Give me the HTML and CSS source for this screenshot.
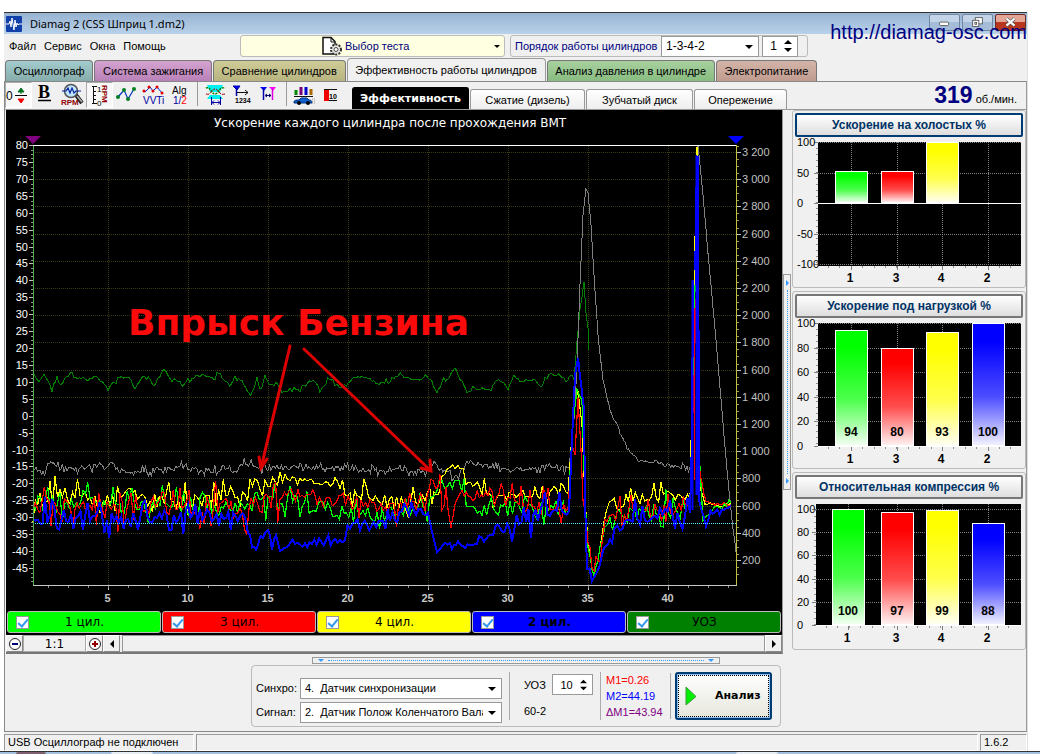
FILE: index.html
```html
<!DOCTYPE html>
<html lang="ru">
<head>
<meta charset="utf-8">
<title>Diamag 2</title>
<link rel="stylesheet" href="styles.css">
</head>
<body>
<div class="window">
  <header class="titlebar">
    <svg class="app-icon" viewBox="0 0 16 16" width="16" height="16"><rect width="16" height="16" rx="1" fill="#1040a8"/><path d="M0 8h3l1-3 1 6 1-9 2 12 1-10 1 7 1-4 1 2 1-1h3" fill="none" stroke="#fff"/></svg>
    <h1>Diamag 2 (CSS Шприц 1.dm2)</h1>
    <div class="winbtns">
      <button class="winbtn" aria-label="Свернуть"><svg viewBox="0 0 31 17" width="29" height="15"><rect x="10" y="8" width="10" height="4" rx="1" fill="#fff" stroke="#555"/></svg></button>
      <button class="winbtn" aria-label="Развернуть"><svg viewBox="0 0 31 17" width="29" height="15"><g fill="#fff" stroke="#555"><rect x="13" y="3" width="8" height="7"/><rect x="10" y="6" width="7" height="7"/><rect x="12.500" y="8.500" width="2" height="2"/></g></svg></button>
      <button class="winbtn close" aria-label="Закрыть"><svg viewBox="0 0 31 17" width="29" height="15"><path d="M11 4l9 8M20 4l-9 8" stroke="#555" stroke-width="4"/><path d="M11 4l9 8M20 4l-9 8" stroke="#fff" stroke-width="2.500"/></svg></button>
    </div>
    <a class="site" href="#">http://diamag-osc.com</a>
  </header>

  <div class="menurow">
    <nav class="menu"><a href="#">Файл</a><a href="#">Сервис</a><a href="#">Окна</a><a href="#">Помощь</a></nav>
    <button class="test-pick">
      <svg viewBox="0 0 22 20" width="22" height="20"><path d="M2 1.500h8l4 4V18H2z" fill="#fff" stroke="#111" stroke-width="1.500"/><path d="M10 1.500V6h4" fill="none" stroke="#111"/><circle cx="15" cy="13.500" r="5" fill="#e8e8e0" stroke="#333" stroke-width="2" stroke-dasharray="2 1.200"/><circle cx="15" cy="13.500" r="2" fill="#fff" stroke="#444"/></svg>
      Выбор теста<span class="tri"></span>
    </button>
    <div class="order">
      <label for="order">Порядок работы цилиндров</label>
      <span class="select order-select"><select id="order"><option>1-3-4-2</option></select></span>
      <span class="spin"><input aria-label="Цилиндр" value="1"><svg viewBox="0 0 8 14" width="8" height="14"><path d="M0 5l4-4 4 4zM0 9l4 4 4-4z"/></svg></span>
    </div>
  </div>

  <nav class="tabs">
    <button class="tab teal">Осциллограф</button>
    <button class="tab pink">Система зажигания</button>
    <button class="tab olive">Сравнение цилиндров</button>
    <button class="tab active">Эффективность работы цилиндров</button>
    <button class="tab green">Анализ давления в цилиндре</button>
    <button class="tab brown">Электропитание</button>
  </nav>

  <div class="body">
    <div class="toolbar">
      <button class="tool pressed" aria-label="Ноль"><svg viewBox="0 0 27 26"><text x="1" y="18" font-size="12">0</text><path d="M10 13.500h12" stroke="#000"/><path d="M16 12V9M13 10l3-4 3 4z" fill="#007020" stroke="#007020"/><path d="M13 17l3 4 3-4z" fill="#f00000" stroke="#f00000"/></svg></button>
      <button class="tool" aria-label="Жирный"><svg viewBox="0 0 27 26"><text x="12" y="16" class="serif" text-anchor="middle">B</text><path d="M6 18.500h13" stroke="#000" stroke-width="1.500"/></svg></button>
      <button class="tool" aria-label="Обороты"><svg viewBox="0 0 27 26"><path d="M17 13l6 8" stroke="#222" stroke-width="4"/><path d="M18 14l5 6" stroke="#b0b0b0" stroke-width="1.500"/><circle cx="12" cy="9" r="6.500" fill="#bfe4ff" stroke="#555" stroke-width="1.500"/><path d="M3 9h4l2-3 2 5 2-5 2 5 2-2h5" fill="none" stroke="#0020a0" stroke-width="1.200"/><text x="2" y="23" class="tiny maroon">RPM</text></svg></button>
      <button class="tool pressed" aria-label="Шкала оборотов"><svg viewBox="0 0 27 26"><path d="M6 4.500h5M6 21.500h5M7.500 4v18M7 9.500h3M7 13.500h3M7 17.500h3" fill="none" stroke="#111"/><text x="11" y="10" font-size="8">1</text><text x="11" y="24" font-size="8">0</text><text class="tiny maroon" transform="translate(16 3) rotate(90)">RPM</text></svg></button>
      <button class="tool" aria-label="График"><svg viewBox="0 0 27 26"><path d="M5 15l6-7 4 9 6-10" fill="none" stroke="#0030c0" stroke-width="1.200"/><g fill="#008020"><circle cx="5" cy="15" r="2"/><circle cx="11" cy="8" r="2"/><circle cx="15" cy="17" r="2"/><circle cx="21" cy="7" r="2"/></g></svg></button>
      <button class="tool" aria-label="VVTi"><svg viewBox="0 0 27 26"><path d="M5 10l5-5 3 4 4-4 5 6" fill="none" stroke="#0020c0"/><g fill="#e00000"><circle cx="4" cy="9" r="1.500"/><circle cx="9" cy="5" r="1.500"/><circle cx="13" cy="9" r="1.500"/><circle cx="17" cy="5" r="1.500"/><circle cx="22" cy="11" r="1.500"/></g><text x="3" y="22" font-size="10" fill="#0000a0">VVTi</text></svg></button>
      <button class="tool" aria-label="Алгоритм"><svg viewBox="0 0 27 26"><text x="5" y="12" font-size="10">Alg</text><text x="6" y="22" font-size="10" fill="#0000a0">1/<tspan fill="#f00">2</tspan></text></svg></button>
      <span class="sep"></span>
      <button class="tool" aria-label="Клапаны"><svg viewBox="0 0 27 26"><path d="M5 3h16l-3 7H8zM8 13h10l3 4H5z" fill="#00f0f0"/><path d="M4 6c5-2 5 6 9 6s4-8 10-6" fill="none" stroke="#008000" stroke-dasharray="2 1" stroke-width="1.500"/><path d="M4 12c5 2 5-5 9-5s4 7 10 5" fill="none" stroke="#a00000" stroke-dasharray="3 1"/><path d="M9.500 15v8M18.500 15v8M10 20.500h8M12 18.500l-2 2 2 2M16 18.500l2 2-2 2" fill="none" stroke="#0000a0"/></svg></button>
      <button class="tool" aria-label="Порядок"><svg viewBox="0 0 27 26"><path d="M4 4h7l-3 4z" fill="#00f" stroke="#00a"/><path d="M7.500 6v8" stroke="#00a" stroke-width="1.500"/><path d="M8 10.500h11M16 8l3 2.500-3 2.500" fill="none" stroke="#111"/><text x="6" y="21" class="micro">1234</text></svg></button>
      <button class="tool" aria-label="Маркеры"><svg viewBox="0 0 27 26"><path d="M4 5h7l-3 4z" fill="#00f"/><path d="M7.500 6v12" stroke="#00a" stroke-width="1.500"/><path d="M13 5h7l-3 4z" fill="#f0f"/><path d="M16.500 6v12" stroke="#d0d" stroke-width="1.500"/><path d="M10 13.500h5M11 12l-2 1.500 2 1.500M13 12l2 1.500-2 1.500" fill="none" stroke="#006"/></svg></button>
      <span class="sep"></span>
      <button class="tool" aria-label="Автомобиль"><svg viewBox="0 0 27 26"><path d="M5 8v5" stroke="#080" stroke-width="3"/><path d="M10 5v8" stroke="#707" stroke-width="3"/><path d="M15 5v8" stroke="#00c" stroke-width="3"/><path d="M20 7v6" stroke="#a60" stroke-width="3"/><path d="M3 14.500h19" stroke="#111"/><path d="M3 20c0-2 3-2 5-2l2-2h6l2 2c2 0 3 1 3 3H3z" fill="#1060d0" stroke="#003080"/><circle cx="8" cy="21" r="2"/><circle cx="17" cy="21" r="2"/><path d="M21 17h3M21 19h3M21 21h3" stroke="#999" stroke-dasharray="1 1"/></svg></button>
      <button class="tool" aria-label="Уровень"><svg viewBox="0 0 27 26"><rect x="6" y="7" width="5" height="12" fill="#f00000"/><path d="M6 7.500h13M11 18.500h8" stroke="#111"/><text x="11" y="17" class="micro">10</text></svg></button>
      <nav class="subtabs">
        <button class="subtab on">Эффективность</button>
        <button class="subtab">Сжатие (дизель)</button>
        <button class="subtab disk">Зубчатый диск</button>
        <button class="subtab adv">Опережение</button>
      </nav>
      <div class="rpm"><strong>319</strong> об./мин.</div>
    </div>

    <main class="main">
      <section class="scope">
        <svg id="scope" class="plot" viewBox="6 110 776 500"></svg>
        <div class="legend">
          <label class="lime"><input type="checkbox" checked><span>1 цил.</span></label>
          <label class="red"><input type="checkbox" checked><span>3 цил.</span></label>
          <label class="yellow"><input type="checkbox" checked><span>4 цил.</span></label>
          <label class="blue"><input type="checkbox" checked><span>2 цил.</span></label>
          <label class="dark"><input type="checkbox" checked><span>УОЗ</span></label>
        </div>
        <div class="zoombar">
          <button aria-label="Уменьшить"><svg viewBox="0 0 14 14" width="14" height="14"><circle cx="7" cy="7" r="5.500" fill="#fff" stroke="#222"/><path d="M4 7h6" stroke="#000080" stroke-width="2"/></svg></button>
          <output>1:1</output>
          <button aria-label="Увеличить"><svg viewBox="0 0 14 14" width="14" height="14"><circle cx="7" cy="7" r="5.500" fill="#fff" stroke="#222"/><path d="M4 7h6M7 4v6" stroke="#900000" stroke-width="2"/></svg></button>
          <button aria-label="Влево"><svg viewBox="0 0 14 14" width="14" height="14"><path d="M9 3v8L5 7z"/></svg></button>
          <div class="track"></div>
          <button aria-label="Вправо"><svg viewBox="0 0 14 14" width="14" height="14"><path d="M5 3v8l4-4z"/></svg></button>
        </div>
      </section>
      <div class="vsplit"><span class="vgrip"><i></i><b></b><i></i></span></div>
      <aside class="side">
        <section class="card"><button class="cardbtn focus">Ускорение на холостых %</button><svg id="idle" viewBox="793 137 232 149"></svg></section>
        <section class="card"><button class="cardbtn">Ускорение под нагрузкой %</button><svg id="load" viewBox="793 137 232 149"></svg></section>
        <section class="card"><button class="cardbtn">Относительная компрессия %</button><svg id="comp" viewBox="793 137 232 149"></svg></section>
      </aside>
    </main>

    <div class="hgrip"><i></i><b></b><i></i></div>

    <form class="controls">
      <div class="signals">
        <label for="sync">Синхро:</label><span class="select"><select id="sync"><option>4.&nbsp; Датчик синхронизации</option></select></span>
        <label for="sig">Сигнал:</label><span class="select"><select id="sig"><option>2.&nbsp; Датчик Полож Коленчатого Вала</option></select></span>
      </div>
      <div class="uoz">
        <label for="uoz">УОЗ</label><span class="spin"><input id="uoz" value="10"><svg viewBox="0 0 8 14" width="8" height="14"><path d="M0 5l4-4 4 4zM0 9l4 4 4-4z"/></svg></span>
        <span>60-2</span>
      </div>
      <div class="marks"><span class="m1">M1=0.26</span><span class="m2">M2=44.19</span><span class="dm">ΔM1=43.94</span></div>
      <div class="go"><button type="button" class="analyze"><svg viewBox="0 0 12 20" width="12" height="20"><path d="M1 1l10 9.500L1 19z" fill="#00f000" stroke="#3a9a3a"/></svg><span>Анализ</span></button></div>
    </form>
  </div>

  <footer class="status"><span class="usb">USB Осциллограф не подключен</span><span class="mid"></span><span class="ver">1.6.2</span></footer>
</div>
<div class="taskbar"><i></i><i></i><i></i></div>
<script src="charts.js"></script>
</body>
</html>
```
FILE: styles.css
```css
* { box-sizing: border-box; }
body { margin: 0; background: #fff; font: 12px/14px "Liberation Sans", Arial, sans-serif; color: #000; display: flex; flex-direction: column; min-height: 100vh; overflow: hidden; }
button, input, select { font: inherit; color: inherit; }
button { padding: 0; margin: 0; }
a { color: inherit; text-decoration: none; }
svg { display: block; }
.window { margin: 12px 12px 0 4px; background: #f0f0f0; border-right: 1px solid #e0e0e0; }

.titlebar { position: relative; height: 22px; border-top: 1px solid #333; background: linear-gradient(#98b4d2, #b9d1ea); display: flex; align-items: center; padding: 0 1px 0 2px; }
.titlebar h1 { margin: 0 auto 0 8px; font: 12px/16px "Noto Sans", "Open Sans", sans-serif; font-size: 11px; }
.winbtns { display: flex; gap: 2px; align-self: flex-start; padding-top: 1px; }
.winbtn { width: 31px; height: 17px; border: 1px solid #7186a0; border-radius: 2px; background: linear-gradient(#c3d4e8 50%, #a4bcd8 50%); }
.winbtn.close { background: linear-gradient(#e5a595 50%, #b8361d 50%); border-color: #6a2a22; }
.site { position: absolute; right: 0; top: 8px; font-size: 20px; line-height: 22px; color: #000080; }

.menurow { display: flex; height: 24px; align-items: center; padding-left: 5px; }
.menu { display: flex; gap: 8px; width: 231px; font-size: 11px; }
.test-pick { width: 265px; height: 22px; background: #ffffe1; border: 1px solid #bbb; border-radius: 3px; color: #000080; display: flex; align-items: center; padding: 0 4px 0 80px; gap: 2px; font-size: 11px; }
.tri { margin-left: auto; border: 3px solid transparent; border-top-color: #000; border-bottom: 0; }
.order { margin-left: 5px; height: 22px; border: 1px solid #bbb; border-radius: 3px; display: flex; align-items: center; padding: 0 9px 0 4px; gap: 3px; color: #000080; }
.select { position: relative; display: block; min-width: 0; }
.select::after { content: ""; position: absolute; right: 6px; top: 9px; border: 4px solid transparent; border-top-color: #000; border-bottom: 0; pointer-events: none; }
.select select { appearance: none; width: 100%; height: 21px; border: 1px solid #999; border-radius: 0; background: #fff; color: #000; padding: 0 18px 0 4px; display: block; }
.order-select { width: 98px; }
.order label { width: 143px; font-size: 11px; white-space: nowrap; }
.spin { display: flex; align-items: center; background: #fff; border: 1px solid #999; height: 21px; padding-right: 5px; color: #000; }
.spin input { width: 21px; border: 0; padding: 0; background: transparent; text-align: center; }

.tabs { display: flex; align-items: flex-end; height: 23px; gap: 1px; padding: 0 210px 0 1px; }
.tab { height: 21px; border: 1px solid #777; border-bottom: 0; border-radius: 4px 4px 0 0; flex: 1 1 auto; white-space: nowrap; font-size: 11px; }
.tab.active { height: 23px; background: #f0f0f0; border-color: #999; }
.teal { background: linear-gradient(#a4cccc, #86acac); }
.pink { background: linear-gradient(#d4a4d0, #b880b8); }
.olive { background: linear-gradient(#d0cc98, #b8b480); }
.green { background: linear-gradient(#a8d0a0, #88bc80); }
.brown { background: linear-gradient(#d4b4a8, #c09c90); }

.body { border: 1px solid #888; border-right-color: #999; }
.toolbar { display: flex; height: 28px; align-items: flex-start; border-bottom: 1px solid #999; }
.tool { width: 27px; height: 26px; border: 0; background: none; flex: none; }
.tool svg { width: 27px; height: 26px; }
.tool.pressed { background: #f8f8f8; border: 1px solid #aaa; border-right-color: #fff; border-bottom-color: #fff; }
.tool.pressed svg { margin: -1px; }
.serif { font: bold 18px "Liberation Serif", serif; }
.tiny { font-size: 8px; font-weight: bold; }
.micro { font-size: 7px; font-weight: bold; }
.maroon { fill: #900000; }
.sep { width: 8px; height: 24px; flex: none; background: linear-gradient(#999, #999) 3px 0 / 1px 100% no-repeat; }
.subtabs { display: flex; align-items: flex-end; height: 27px; margin-left: 7px; gap: 1px; }
.subtab { height: 20px; width: 115px; border: 1px solid #999; border-bottom: 0; border-radius: 3px 3px 0 0; background: linear-gradient(#fff, #eee); white-space: nowrap; font-size: 11px; }
.subtab.on { width: 117px; height: 22px; background: #000; color: #fff; font: bold 11px/14px "DejaVu Sans", sans-serif; border-color: #000; }
.subtab.disk { width: 107px; }
.subtab.adv { width: 93px; }
.rpm { margin-left: auto; padding-right: 9px; display: flex; align-items: baseline; gap: 3px; font-size: 11px; line-height: 26px; }
.rpm strong { font-size: 23px; color: #000080; }

.main { display: grid; grid-template-columns: minmax(0, 1fr) 8px 235px; padding-left: 1px; }
.scope { background: #000; border-right: 1px solid #999; border-bottom: 2px solid #777; }
.plot { width: 100%; }
.legend { display: flex; gap: 1px; padding: 1px 1px 2px; }
.legend label { flex: 1; height: 22px; border: 1px solid #bbb; border-radius: 3px; display: flex; align-items: center; padding-left: 8px; font: 12px/16px "DejaVu Sans", sans-serif; }
.legend span { flex: 1; text-align: center; padding-right: 20px; }
.legend input { appearance: none; width: 13px; height: 13px; margin: 0; border: 1px solid #999; background: #fff; display: grid; place-items: center; }
.legend input:checked::before { content: ""; width: 4px; height: 8px; border: solid #3399f0; border-width: 0 2px 2px 0; transform: rotate(40deg); }
.lime { background: #0f0; }
.red { background: #f00; }
.yellow { background: #ff0; }
.blue { background: #00f; }
.legend .blue { font-weight: bold; }
.dark { background: #008000; }
.zoombar { display: flex; height: 17px; background: #f0f0f0; }
.zoombar button { width: 17px; border: 1px solid #fff; border-right-color: #888; border-bottom-color: #888; background: #f0f0f0; display: grid; place-items: center; }
.zoombar output { width: 63px; text-align: center; border: 1px solid #aaa; font: 12px/16px "DejaVu Sans", sans-serif; }
.track { flex: 1; border: 1px solid #999; margin-left: 2px; }
.vsplit { display: grid; align-items: center; }
.vgrip { height: 216px; border: 1px solid #999; display: flex; flex-direction: column; align-items: center; padding: 5px 0; gap: 4px; }
.vgrip b { flex: 1; border-left: 1px dotted #39f; }
.vgrip i { border: 3px solid transparent; border-left-color: #39f; border-right: 0; }

.side { padding: 0 0 0 1px; display: flex; flex-direction: column; gap: 3px; }
.card { border: 1px solid #bbb; border-radius: 3px; padding: 2px 0 1px; }
.cardbtn { display: block; width: calc(100% - 4px); margin: 0 2px; height: 24px; border: 2px solid #777; border-radius: 2px; background: linear-gradient(#fff, #dedede); color: #003366; font-weight: bold; font-size: 12px; }
.cardbtn.focus { border-color: #003c74; }
.card svg { width: 100%; }

.hgrip { width: 408px; height: 7px; margin: 3px auto 1px 307px; border: 1px solid #999; display: flex; align-items: center; gap: 4px; padding: 0 5px; }
.hgrip b { flex: 1; border-top: 1px dotted #39f; }
.hgrip i { border: 3px solid transparent; border-top-color: #39f; border-bottom: 0; }
.controls { width: 530px; height: 62px; margin: 0 auto 4px 246px; border: 1px solid #bbb; border-radius: 4px; display: flex; align-items: center; padding-left: 4px; font-size: 11px; }
.signals { display: grid; grid-template-columns: 44px 202px; row-gap: 3px; align-items: center; padding-top: 8px; }
.uoz { margin-left: 7px; padding: 0 7px 0 14px; border-left: 1px solid #aaa; border-right: 1px solid #aaa; display: grid; grid-template-columns: 28px auto; row-gap: 5px; align-items: center; height: 48px; width: 92px; }
.uoz .spin { width: 41px; }
.uoz .spin input { width: 27px; }
.marks { display: flex; flex-direction: column; gap: 2px; padding: 0 7px 0 5px; border-right: 1px solid #aaa; width: 70px; white-space: nowrap; }
.m1 { color: #f00; }
.m2 { color: #00f; }
.dm { color: #800080; }
.go { padding-left: 4px; }
.analyze { width: 97px; height: 48px; border: 2px solid #003c74; border-radius: 3px; background: linear-gradient(#fff, #e6e6dc); box-shadow: inset 0 0 0 1px #8cc0f0; outline: 1px dotted #000; outline-offset: -4px; display: flex; align-items: center; padding-left: 8px; gap: 18px; font: bold 11px/14px "DejaVu Sans", sans-serif; }

.status { display: flex; gap: 2px; height: 19px; padding-top: 2px; font-size: 11px; line-height: 15px; }
.status span { border: 1px solid #999; border-right-color: #fff; border-bottom-color: #fff; padding-left: 3px; }
.usb { width: 190px; white-space: nowrap; }
.mid { flex: 1; }
.ver { width: 47px; }
.taskbar { flex: 1; min-height: 3px; background: #a4c0e0; border-top: 1px solid #333; display: flex; overflow: hidden; }
.taskbar i { width: 42px; margin-left: 3px; background: #e8eef6; border-radius: 3px 3px 0 0; }
.taskbar i:first-child { width: 30px; margin-left: 16px; margin-right: 62px; background: #806070; }
.taskbar i:last-child { margin-left: auto; margin-right: 262px; }

.c-title { font: 12px "DejaVu Sans", sans-serif; fill: #fff; }
.c-note { font: bold 36px "DejaVu Sans", sans-serif; fill: #fa0a0a; }
.c-left { font-size: 11px; fill: #fff; text-anchor: end; }
.c-right { font-size: 11px; fill: #c0c0c0; }
.c-bottom { font-size: 11px; font-weight: bold; fill: #c8c8c8; text-anchor: middle; }
.b-tick { font-size: 11px; }
.b-cat { font-size: 12px; font-weight: bold; text-anchor: middle; }
```
FILE: charts.js
```js
const NS = 'http://www.w3.org/2000/svg';
function add(parent, tag, attrs, text) {
  const el = document.createElementNS(NS, tag);
  for (const k in attrs) el.setAttribute(k, attrs[k]);
  if (text !== undefined) el.textContent = text;
  parent.appendChild(el);
  return el;
}
const line = (p, x1, y1, x2, y2, stroke, extra) =>
  add(p, 'path', Object.assign({ d: `M${x1} ${y1}L${x2} ${y2}`, stroke, fill: 'none' }, extra));

let seed = 7;
function rnd() { seed = (seed * 16807) % 2147483647; return seed / 2147483647 * 2 - 1; }

// Each key is "x y amplitude"; the amplitude holds until the next key.
function trace(p, keys, stroke, width, step) {
  const k = keys.trim().split(',').map(s => s.trim().split(/\s+/).map(Number));
  let pts = [], amp = 0;
  for (let i = 0; i < k.length - 1; i++) {
    const [x, y, a] = k[i], [nx, ny] = k[i + 1];
    if (a !== undefined) amp = a;
    const n = Math.max(1, Math.round((nx - x) / step));
    for (let j = 0; j < n; j++) {
      const t = j / n, r = rnd();
      pts.push([x + (nx - x) * t, y + (ny - y) * t + r * r * r * amp * 1.3 + rnd() * amp * 0.45]);
    }
  }
  pts.push(k[k.length - 1]);
  add(p, 'polyline', {
    points: pts.map(q => q[0].toFixed(1) + ',' + Math.min(584, q[1]).toFixed(1)).join(' '),
    fill: 'none', stroke, 'stroke-width': width, 'shape-rendering': 'crispEdges'
  });
}

const s = document.getElementById('scope');
add(s, 'text', { x: 214, y: 127, class: 'c-title' }, 'Ускорение каждого цилиндра после прохождения ВМТ');
for (let v = 200; v <= 3200; v += 200) {
  const y = Math.round(560 - (v - 200) * 0.136) + 0.5;
  line(s, 33, y, 736, y, '#3c3c10', { 'stroke-dasharray': '1 1' });
}
for (let v = 5; v <= 40; v += 5) {
  const x = 28.5 + v * 16;
  line(s, x, 146, x, 585, '#3c3c10', { 'stroke-dasharray': '1 1' });
  line(s, x, 585, x, 590, '#c0c0c0');
  add(s, 'text', { x: x - 1, y: 602, class: 'c-bottom' }, v);
}
for (let x = 48.5; x < 736; x += 20) line(s, x, 586, x, 588, '#909090');
for (let v = 80; v >= -45; v -= 5) {
  const y = Math.round(145 + (80 - v) * 3.384) + 0.5;
  line(s, 29, y, 33, y, '#c0c0c0');
  add(s, 'text', { x: 28, y: y + 3.5, class: 'c-left' }, v);
  for (let i = 1; i < 4; i++) line(s, 31, Math.round(y + i * 4.2) + .5, 33, Math.round(y + i * 4.2) + .5, '#909090');
}
for (let v = 200; v <= 3200; v += 200) {
  const y = Math.round(560 - (v - 200) * 0.136) + 0.5;
  line(s, 737, y, 741, y, '#c0c0c0');
  for (let i = -1; i < 3; i++) if (i) line(s, 737, Math.round(y + i * 6.8) + .5, 739, Math.round(y + i * 6.8) + .5, '#a0a040');
  add(s, 'text', { x: 742, y: y + 3.5, class: 'c-right' }, v >= 1000 ? (v / 1000 | 0) + ' ' + String(v % 1000).padStart(3, '0') : v);
}
trace(s, `33 375 2.5,39 381,44 374,52 389,57 376,61 385,70 372,74 378,83 378,88 381,94 375,100 379,108 389,114 384,118 378,125 375,135 389,141 378,150 379,154 387,160 376,164 370,168 375,180 382,183 386,188 379,200 375,210 377,215 380,217 373,222 376,228 382,231 388,235 379,244 382,249 396,254 389,257 379,260 389,265 379,270 384,276 382,282 392,290 388,300 389,
  308 382,313 379,320 390,326 383,331 379,339 388,350 381,362 376,374 380,379 384,390 380,400 376,412 378,418 381,427 377,432 384,437 392,442 382,449 378,455 366,460 378,467 391,480 388,491 390,497 378,508 388,514 377,522 383,533 379,541 385,549 374,560 375,566 381,571 375,574 378,577 340,580 310,584 284,586 312,588 330,589 350`, '#008000', 1, 2);
trace(s, `33 471 4,46 470,52 464,70 469,110 465,120 471,165 471,180 467,200 471,240 470,247 461,254 466,262 470,280 467,300 467,340 468,360 470,400 470,430 471,434 460,440 471,450 472,452 479,460 474,467 460,475 464,490 465,500 470,540 468,569 468 1,574 420,577 365,580 285,583 215,586 190,588 193,591 225,594 275,598 335,603 380 1.5,610 410,617 425,627 447,638 461,655 463 3,675 467,690 467 1,693 400,696 200,698 145,700 165,703 195,710 275,716 340,721 400,727 470,732 520,736 552`, '#808080', 1, 1.5);
trace(s, `33 500 15,45 494,60 497,80 493,100 503,125 490,150 500,190 495,240 495 8,250 487,270 483 5,280 478,300 480,335 484 8,350 495 12,380 500,425 500,432 485,438 495,442 476 3,450 467,463 468,466 484 7,475 482,482 493 10,500 498,530 492,552 490,568 495 1,571 450,574 402,578 392,582 425,585 500,588 545 8,594 572,600 550,604 515,612 505 10,640 500,668 492 7,690 498 1,694 290,697 147,699 380,700 485 3,705 505,720 505 2,731 503`, '#ffff00', 1.2, 2.4);
trace(s, `33 506 16,60 508,90 500,120 506,160 505,200 508,240 507,257 490,268 503,280 497,300 502,330 508 12,370 512,425 510,434 496,442 487,450 487,457 479,464 499,475 510,510 510,568 513 2,572 430,577 390,582 400,585 500,588 550 10,594 576,600 555,605 523,620 512 13,690 508 1,694 330,698 165,699 450,703 520,715 507 3,731 503`, '#00ff00', 1.2, 2.4);
trace(s, `33 506 19,60 508,90 504,120 510,160 505,200 510,240 508,260 505,280 497 8,300 496,330 499 14,370 505,425 508,431 480,440 492,448 509 5,451 528,455 502,462 490,475 498,490 493 14,530 504,568 510 2,572 445,575 455 32,578 395,581 450,585 510 2,588 550 10,594 570,600 560,605 525,620 510 14,690 505 1,694 380,696 300,698 380,700 475 3,706 502,731 505`, '#ff0000', 1.2, 2.2);
trace(s, `33 517 13,90 518,150 517,200 515,245 517 5,248 535,254 552,258 540,268 531,272 548,276 535,282 552,290 543,305 543 12,340 540,360 526,390 514,428 514 3,432 532,437 552,445 542,452 550,458 543 6,470 547,484 537 14,500 530,512 522,545 512,569 510 2,572 440,575 375,578 357,580 375,584 410,585 500,587 560 8,592 580,600 566,604 540,608 545,612 530 14,625 527,640 520,665 518,690 512 1,692 440,693 280,695 285,697 157,698 157,699 500,702 514 4,706 522,715 511,731 506`, '#0000ff', 2, 2.4);
line(s, 697, 155, 697, 495, '#0000ff', { 'stroke-width': 3 });
line(s, 692.5, 280, 692.5, 510, '#0000ff', { 'stroke-width': 2 });
line(s, 694.5, 308, 694.5, 480, '#ff0000');
line(s, 694.5, 270, 694.5, 285, '#ffff00');
line(s, 697.5, 147, 697.5, 156, '#ffff00');
line(s, 33, 523.5, 736, 523.5, '#50f0ff', { 'stroke-dasharray': '1 1' });
line(s, 33, 145.5, 736, 145.5, '#fff');
line(s, 33.5, 146, 33.5, 586, '#50b050');
line(s, 736.5, 145, 736.5, 586, '#c0c040');
line(s, 33, 585.5, 737, 585.5, '#c8c8c8');
add(s, 'path', { d: 'M25 136h16l-8 8z', fill: '#800080' });
add(s, 'path', { d: 'M728 136h16l-8 8z', fill: '#0000ff' });
add(s, 'text', { x: 128, y: 335, class: 'c-note' }, 'Впрыск Бензина');
add(s, 'path', { d: 'M290 346L261 468M259 457l2 11 6-9M304 349L431 471M421 468l10 3-1-11', fill: 'none', stroke: '#dc0000', 'stroke-width': 3, 'stroke-linecap': 'round' });

// Bar charts of the side column
const fills = ['#00ff00', '#ff0000', '#ffff00', '#0000ff'];
function bars(id, o) {
  const g = document.getElementById(id);
  const defs = add(g, 'defs', {});
  fills.forEach((c, i) => {
    const lg = add(defs, 'linearGradient', { id: id + i, x1: 0, x2: 0, y1: 0, y2: 1 });
    add(lg, 'stop', { offset: 0.15, 'stop-color': c });
    add(lg, 'stop', { offset: 0.6, 'stop-color': c, 'stop-opacity': 0.7 });
    add(lg, 'stop', { offset: 1, 'stop-color': c, 'stop-opacity': 0.05 });
  });
  add(g, 'rect', { x: o.x, y: o.top, width: 1021 - o.x, height: o.bottom - o.top });
  const yOf = v => o.zero - v * o.unit;
  const xs = [o.first, 897, 942, 988];
  o.ticks.forEach(v => {
    const y = Math.round(yOf(v)) + 0.5;
    line(g, o.x - 4, y, o.x, y, '#808080');
    if (v) line(g, o.x, y, 1021, y, '#808080', { 'stroke-dasharray': '1 1' });
    add(g, 'text', { x: 797, y: y + 3.5, class: 'b-tick' }, v);
  });
  for (let y = o.top + 6; y < o.bottom; y += 6) line(g, o.x - 2, y + .5, o.x, y + .5, '#909090');
  for (let x = o.x + 10; x < 1018; x += 11.4) line(g, Math.round(x) + .5, o.bottom, Math.round(x) + .5, o.bottom + 2, '#909090');
  xs.forEach((x, i) => {
    line(g, x + .5, o.top, x + .5, o.bottom, '#808080', { 'stroke-dasharray': '1 1' });
    line(g, x + .5, o.bottom, x + .5, o.bottom + 4, '#808080');
    const v = o.data[i];
    if (v) {
      const box = { x: x - 15.5, y: Math.round(yOf(v)) + .5, width: 32, height: Math.round(v * o.unit) - 1 };
      add(g, 'rect', Object.assign({ fill: '#fff' }, box));
      add(g, 'rect', Object.assign({ fill: `url(#${id}${i})`, stroke: '#fff' }, box));
    }
    if (o.values) add(g, 'text', { x: x, y: o.zero - 10, class: 'b-cat' }, v);
    add(g, 'text', { x: x - 1, y: o.bottom + 16, class: 'b-cat' }, [1, 3, 4, 2][i]);
  });
  line(g, o.x, o.zero + .5, 1021, o.zero + .5, '#fff');
}
bars('idle', { x: 818, top: 142, bottom: 266, zero: 203, unit: 0.61, first: 851, ticks: [100, 50, 0, -50, -100], data: [53, 52, 100, 0] });
bars('load', { x: 818, top: 142, bottom: 266, zero: 265, unit: 1.23, first: 851, ticks: [100, 80, 60, 40, 20, 0], data: [94, 80, 93, 100], values: true });
bars('comp', { x: 816, top: 142, bottom: 264, zero: 263, unit: 1.16, first: 848, ticks: [100, 80, 60, 40, 20, 0], data: [100, 97, 99, 88], values: true });
```
